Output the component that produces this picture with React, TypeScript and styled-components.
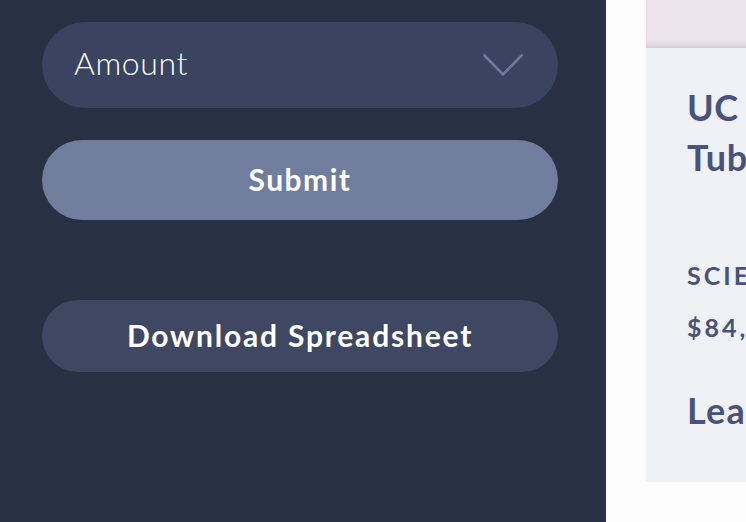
import React, { useState } from 'react';
import styled, { createGlobalStyle } from 'styled-components';

const GlobalStyle = createGlobalStyle`
  html, body {
    margin: 0;
    padding: 0;
    background: #fdfcfd;
    font-family: Lato, "Open Sans", sans-serif;
  }
`;

const Page = styled.div`
  display: flex;
  width: 746px;
  height: 522px;
  overflow: hidden;
`;

const Sidebar = styled.aside`
  flex: 0 0 606px;
  box-sizing: border-box;
  background: #283044;
  padding: 22px 48px 0 42px;
  display: flex;
  flex-direction: column;
`;

const SelectBox = styled.div`
  height: 86px;
  box-sizing: border-box;
  border-radius: 43px;
  background: #3a4460;
  display: flex;
  align-items: center;
  justify-content: space-between;
  padding: 0 34px 6px 32px;
  color: #fff;
  font-size: 32px;
  font-weight: 300;
  letter-spacing: 0.6px;
`;

const ChevronWrap = styled.span`
  display: flex;
  padding-top: 6px;
`;

const PillButton = styled.button<{ $tone: 'primary' | 'secondary'; $h: number }>`
  height: ${(p) => p.$h}px;
  border: none;
  border-radius: ${(p) => p.$h / 2}px;
  background: ${(p) => (p.$tone === 'primary' ? '#717d9c' : '#3f4862')};
  color: #fff;
  font-family: Lato, "Open Sans", sans-serif;
  font-size: 30px;
  font-weight: 700;
  letter-spacing: ${(p) => (p.$tone === 'primary' ? 1.5 : 1.8)}px;
  padding: 0 0 2px;
  cursor: pointer;
`;

const Gap = styled.div<{ $h: number }>`
  height: ${(p) => p.$h}px;
`;

const Spacer = styled.div`
  flex: 0 0 40px;
`;

const Card = styled.section`
  flex: 0 0 420px;
  height: 482px;
  background: #f0f1f5;
  display: flex;
  flex-direction: column;
`;

const CardBand = styled.div`
  height: 48px;
  background: #ebe3ea;
  box-shadow: inset 0 -6px 6px -4px rgba(120, 100, 120, 0.25);
`;

const CardBody = styled.div`
  padding: 34px 41px 0 41px;
  color: #48527a;
  display: flex;
  flex-direction: column;
`;

const Title = styled.h2`
  margin: 0;
  font-size: 36px;
  font-weight: 700;
  letter-spacing: 0.6px;
  line-height: 50px;
  white-space: nowrap;
`;

const Category = styled.div`
  margin-top: 78px;
  font-size: 25px;
  line-height: 30px;
  font-weight: 700;
  letter-spacing: 3px;
  text-transform: uppercase;
  white-space: nowrap;
`;

const Funding = styled.div`
  margin-top: 22px;
  font-size: 25px;
  line-height: 30px;
  font-weight: 700;
  letter-spacing: 3px;
  white-space: nowrap;
`;

const LearnMore = styled.div`
  margin-top: 47px;
  font-size: 36px;
  line-height: 42px;
  font-weight: 700;
  letter-spacing: 1.2px;
  white-space: nowrap;
`;

const Chevron = () => (
  <svg width="42" height="24" viewBox="0 0 42 24" fill="none">
    <path d="M1.5 1.5 L21 21.5 L40.5 1.5" stroke="#6f7a98" strokeWidth="2.6" />
  </svg>
);

export default function App() {
  const [sort] = useState('Amount');

  return (
    <Page>
      <GlobalStyle />
      <Sidebar>
        <SelectBox>
          <span>{sort}</span>
          <ChevronWrap>
            <Chevron />
          </ChevronWrap>
        </SelectBox>
        <Gap $h={32} />
        <PillButton $tone="primary" $h={80}>
          Submit
        </PillButton>
        <Gap $h={80} />
        <PillButton $tone="secondary" $h={72}>
          Download Spreadsheet
        </PillButton>
      </Sidebar>
      <Spacer />
      <Card>
        <CardBand />
        <CardBody>
          <Title>
            UC Berkeley
            <br />
            Tuberculosis Research
          </Title>
          <Category>Science</Category>
          <Funding>$84,000</Funding>
          <LearnMore>Learn More</LearnMore>
        </CardBody>
      </Card>
    </Page>
  );
}
